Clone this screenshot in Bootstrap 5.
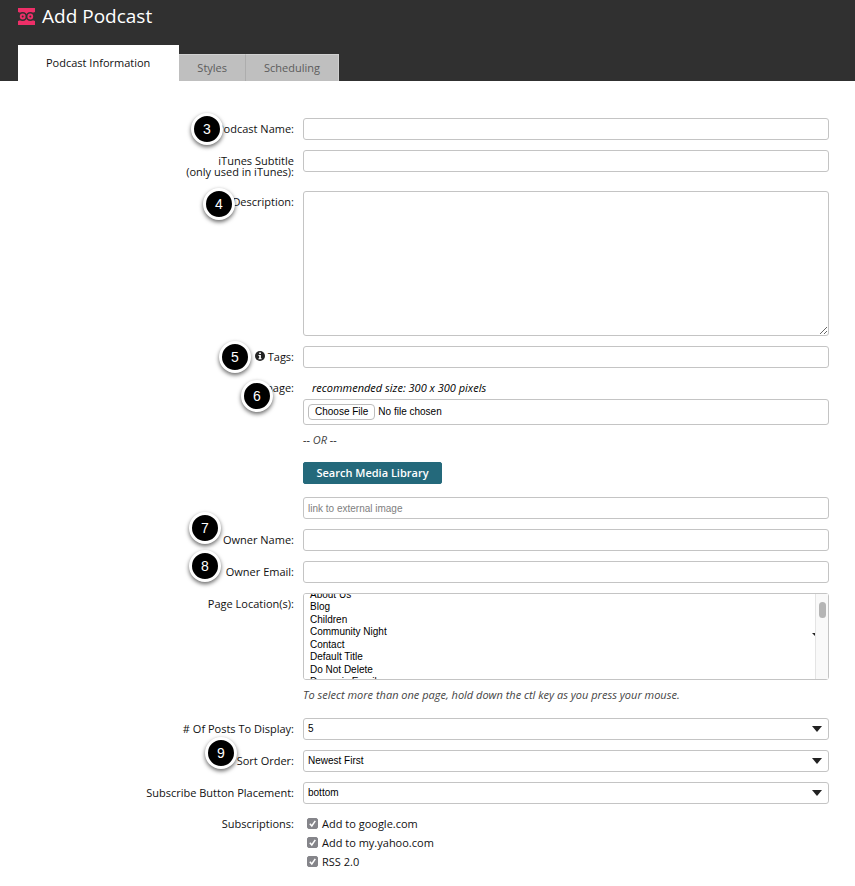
<!DOCTYPE html>
<html lang="en">
<head>
<meta charset="utf-8">
<meta name="viewport" content="width=device-width, initial-scale=1">
<title>Add Podcast</title>
<link href="https://cdn.jsdelivr.net/npm/bootstrap@5.3.0/dist/css/bootstrap.min.css" rel="stylesheet">
<style>
  body { font: 11px/22px "Open Sans", sans-serif; color: #111; background: #fff; }
  .app-header { background: #303030; padding: 0 18px; }
  .app-title { font-size: 19px; line-height: 32px; font-weight: 400; color: #fff; }
  .brand-mark { width: 17px; height: 17px; flex: none; }
  .brand-row { gap: 7px; }
  .app-tabs { border: 0; margin-top: 13px; align-items: flex-end; }
  .app-tabs .nav-link {
    border: 0; border-radius: 0; margin: 0; padding: 2px 18px; height: 27px; line-height: 22px;
    color: #5c5c5c; background: #bfbfbf; border-right: 1px solid #adadad; border-top: 1px solid #d0d0d0;
  }
  .app-tabs .nav-item:last-child .nav-link { border-right-color: #d0d0d0; }
  .app-tabs .nav-link.active { height: 36px; padding: 6px 28px; color: #111; background: #fff; border-color: #fff; }

  .podcast-form { padding: 37px 26px 16px; display: grid; row-gap: 10px; }
  .form-line { display: grid; grid-template-columns: 268fr 526fr; column-gap: 9px; }
  .line-label { position: relative; text-align: right; }
  .two-lines { line-height: 11px; padding: 5px 0 4px; }
  .short-line { line-height: 20px; }
  .check-line { line-height: 19px; }

  .box {
    display: block; width: 100%; height: 22px; padding: 0 4px; border: 1px solid #c4c4c4; border-radius: 3px;
    font: 10px/20px "Liberation Sans", Arial, sans-serif; color: #000; background-color: #fff;
  }
  .box::placeholder { color: #808080; opacity: 1; }
  .box-area { height: 145px; resize: both; }
  .box-file { height: 26px; padding: 4px; line-height: 16px; }
  .box-file::file-selector-button {
    height: 16px; margin: 0 3px 0 0; padding: 0 6px; border: 1px solid #bdbdbd; border-radius: 4px;
    background: #fff; color: #000; font: 10px/14px "Liberation Sans", Arial, sans-serif;
  }
  .box-select {
    appearance: none; padding-right: 24px;
    background: #fff url("data:image/svg+xml,%3Csvg xmlns='http://www.w3.org/2000/svg' viewBox='0 0 10 6'%3E%3Cpath d='M0 0h10L5 6z' fill='%23222'/%3E%3C/svg%3E") no-repeat right 6px center / 10px 6px;
  }
  .box-list { height: 87px; padding: 0 4px; overflow-y: scroll; scrollbar-width: none; }
  .box-list::-webkit-scrollbar { display: none; }
  .box-list option { min-height: 0; height: 12px; line-height: 12px; padding: 0 2px; }
  .box-list option:nth-child(even) { height: 13px; }
  .list-track { position: absolute; top: 1px; right: 1px; bottom: 1px; width: 13px; background: #f9f9f9; border-left: 1px solid #e4e4e4; pointer-events: none; }
  .list-thumb { position: absolute; top: 8px; right: 2px; width: 7px; height: 16px; border-radius: 4px; background: #b5b5b5; }
  .list-tick { position: absolute; top: 40px; right: 14px; width: 3px; height: 3px; background: #222; clip-path: polygon(0 0, 100% 0, 100% 100%); }

  .hint { color: #444; font-style: italic; }
  .hint-below { margin: 4px 0 2px; }
  .hint-dark { color: #000; font-style: italic; line-height: 20px; padding-left: 9px; margin-bottom: 1px; }
  .btn-media {
    --bs-btn-bg: #24697b; --bs-btn-color: #fff; --bs-btn-border-color: #24697b; --bs-btn-hover-bg: #1d5665; --bs-btn-hover-color: #fff;
    width: 139px; padding: 0; height: 22px; line-height: 20px; font-size: 11px; font-weight: 600; border-radius: 2px; margin: 11px 0 13px;
  }
  .tick {
    appearance: none; width: 11px; height: 11px; margin: 0; border-radius: 2px; flex: none;
    background: #fff; border: 1px solid #85858a;
  }
  .tick:checked {
    background: #85858a url("data:image/svg+xml,%3Csvg xmlns='http://www.w3.org/2000/svg' viewBox='0 0 11 11'%3E%3Cpath d='M2.8 5.8l2 2.2L8.3 2.8' fill='none' stroke='%23fff' stroke-width='1.5'/%3E%3C/svg%3E") center / 11px 11px no-repeat;
  }
  .info-mark { width: 10px; height: 10px; margin: -4px 3px 0 0; }

  .step {
    position: absolute; top: var(--step-top); right: var(--step-right); width: 32px; height: 32px;
    border: 3px solid #fff; border-radius: 50%; background: #000; color: #fff; text-align: center;
    font: 14px/26px "Liberation Sans", Arial, sans-serif; box-shadow: 0 2px 4px rgba(0, 0, 0, .6);
  }
  .step-3 { --step-top: -5px; --step-right: 71px; }
  .step-4 { --step-top: -3px; --step-right: 59px; }
  .step-5 { --step-top: -5px; --step-right: 43px; }
  .step-6 { --step-top: 2px; --step-right: 21px; }
  .step-7 { --step-top: -17px; --step-right: 73px; }
  .step-8 { --step-top: -11px; --step-right: 73px; }
  .step-9 { --step-top: -13px; --step-right: 57px; }
</style>
</head>
<body>
<header class="app-header">
  <div class="d-flex align-items-center brand-row">
    <svg class="brand-mark" viewBox="0 0 17 17" aria-hidden="true">
      <path d="M0 0h17v4L14 5v7l3 1v4H0v-4l3-1V5L0 4z" fill="#ee2f68"/>
      <g fill="#ee2f68" stroke="#303030" stroke-width="1.600"><circle cx="4.700" cy="8.500" r="3.700"/><circle cx="12.300" cy="8.500" r="3.700"/></g>
      <g fill="#303030"><circle cx="4.700" cy="8.500" r="1"/><circle cx="12.300" cy="8.500" r="1"/></g>
    </svg>
    <h1 class="app-title m-0">Add Podcast</h1>
  </div>
  <ul class="nav nav-tabs app-tabs">
    <li class="nav-item"><a class="nav-link active" aria-current="page" href="#">Podcast Information</a></li>
    <li class="nav-item"><a class="nav-link" href="#">Styles</a></li>
    <li class="nav-item"><a class="nav-link" href="#">Scheduling</a></li>
  </ul>
</header>

<form class="podcast-form">
  <div class="form-line">
    <label class="line-label" for="name">Podcast Name:<span class="step step-3">3</span></label>
    <div><input class="box" type="text" id="name"></div>
  </div>
  <div class="form-line">
    <label class="line-label two-lines" for="subtitle">iTunes Subtitle<br>(only used in iTunes):</label>
    <div><input class="box" type="text" id="subtitle"></div>
  </div>
  <div class="form-line">
    <label class="line-label" for="description">Description:<span class="step step-4">4</span></label>
    <div><textarea class="box box-area" id="description"></textarea></div>
  </div>
  <div class="form-line">
    <label class="line-label" for="tags"><svg class="info-mark" viewBox="0 0 10 10" aria-hidden="true"><circle cx="5" cy="5" r="5" fill="#222"/><path d="M4.200 1.600h1.700v1.500H4.200zM3.500 4h2.400v3.200h.7v1H3.500v-1h.7V5h-.7z" fill="#fff"/></svg>Tags:<span class="step step-5">5</span></label>
    <div><input class="box" type="text" id="tags"></div>
  </div>
  <div class="form-line">
    <label class="line-label short-line" for="image">Image:<span class="step step-6">6</span></label>
    <div>
      <div class="hint-dark">recommended size: 300 x 300 pixels</div>
      <input class="box box-file" type="file" id="image">
      <div class="hint mt-1">-- OR --</div>
      <button class="btn btn-media d-block" type="button">Search Media Library</button>
      <input class="box" type="text" placeholder="link to external image" aria-label="Link to external image">
    </div>
  </div>
  <div class="form-line">
    <label class="line-label" for="owner">Owner Name:<span class="step step-7">7</span></label>
    <div><input class="box" type="text" id="owner"></div>
  </div>
  <div class="form-line">
    <label class="line-label" for="email">Owner Email:<span class="step step-8">8</span></label>
    <div><input class="box" type="email" id="email"></div>
  </div>
  <div class="form-line">
    <label class="line-label" for="pages">Page Location(s):</label>
    <div>
      <div class="position-relative">
        <select class="box box-list" id="pages" multiple>
          <option>About Us</option>
          <option>Blog</option>
          <option>Children</option>
          <option>Community Night</option>
          <option>Contact</option>
          <option>Default Title</option>
          <option>Do Not Delete</option>
          <option>Dynamic Email</option>
          <option>Events</option>
          <option>Home</option>
        </select>
        <span class="list-track"><span class="list-thumb"></span></span>
        <span class="list-tick"></span>
      </div>
      <div class="hint hint-below">To select more than one page, hold down the ctl key as you press your mouse.</div>
    </div>
  </div>
  <div class="form-line">
    <label class="line-label" for="count"># Of Posts To Display:</label>
    <div><select class="box box-select" id="count"><option>5</option><option>10</option></select></div>
  </div>
  <div class="form-line">
    <label class="line-label" for="sort">Sort Order:<span class="step step-9">9</span></label>
    <div><select class="box box-select" id="sort"><option>Newest First</option><option>Oldest First</option></select></div>
  </div>
  <div class="form-line">
    <label class="line-label" for="placement">Subscribe Button Placement:</label>
    <div><select class="box box-select" id="placement"><option>bottom</option><option>top</option></select></div>
  </div>
  <div class="form-line check-line" role="group" aria-labelledby="subs">
    <div class="line-label" id="subs">Subscriptions:</div>
    <div class="ps-1">
      <div class="d-flex align-items-center gap-1"><input class="tick" type="checkbox" id="google" checked><label for="google">Add to google.com</label></div>
      <div class="d-flex align-items-center gap-1"><input class="tick" type="checkbox" id="yahoo" checked><label for="yahoo">Add to my.yahoo.com</label></div>
      <div class="d-flex align-items-center gap-1"><input class="tick" type="checkbox" id="rss" checked><label for="rss">RSS 2.0</label></div>
    </div>
  </div>
</form>
<script>
  document.getElementById('pages').scrollTop = 5;
</script>
<script src="https://cdn.jsdelivr.net/npm/bootstrap@5.3.0/dist/js/bootstrap.bundle.min.js"></script>
</body>
</html>
